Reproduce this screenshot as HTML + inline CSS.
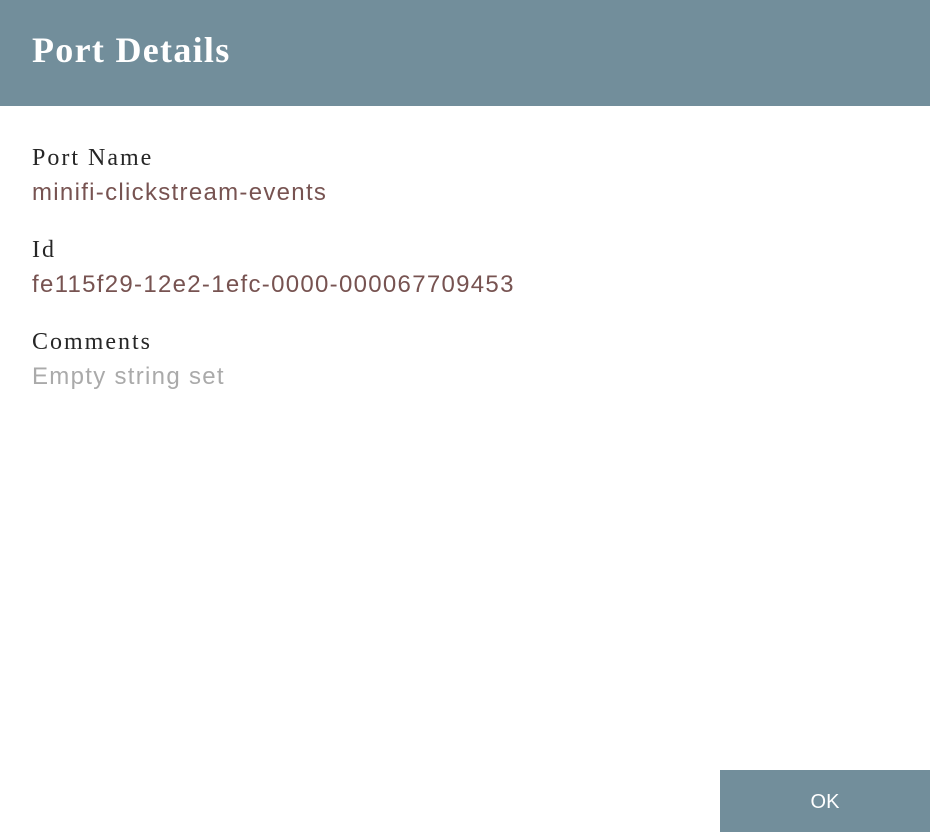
<!DOCTYPE html>
<html><head><style>
body{margin:0;width:930px;height:832px;background:#fff;position:relative;overflow:hidden;font-family:"Liberation Sans",sans-serif}
.hdr{position:absolute;left:0;top:0;width:930px;height:106px;background:#728e9b}
.hdr h1{margin:0;position:absolute;left:32px;top:29px;font-family:"Liberation Serif",serif;font-weight:bold;font-size:36px;letter-spacing:1.3px;color:#fff}
.lbl{position:absolute;left:32px;font-family:"Liberation Serif",serif;font-size:24px;letter-spacing:2px;color:#262626}
.val{position:absolute;left:32px;font-size:24px;letter-spacing:1.3px;color:#775351}
.ok{position:absolute;left:720px;top:770px;width:210px;height:62px;background:#728e9b;color:#fff;font-size:20px;text-align:center;line-height:64px}
</style></head><body>
<div class="hdr"><h1>Port Details</h1></div>
<div class="lbl" style="top:145px">Port Name</div>
<div class="val" style="top:179px">minifi-clickstream-events</div>
<div class="lbl" style="top:237px">Id</div>
<div class="val" style="top:271px">fe115f29-12e2-1efc-0000-000067709453</div>
<div class="lbl" style="top:329px">Comments</div>
<div class="val" style="top:363px;color:#aaa">Empty string set</div>
<div class="ok">OK</div>
</body></html>
